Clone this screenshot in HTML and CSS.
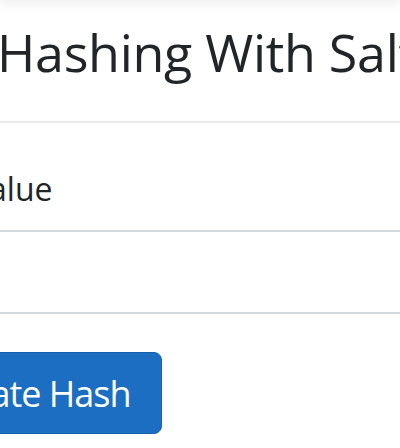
FILE: index.html
```html
<!DOCTYPE html>
<html lang="en">
<head>
<meta charset="utf-8">
<title>Hashing With Salt</title>
<link rel="stylesheet" href="styles.css">
</head>
<body>
<div class="topbar"></div>
<main class="card">
  <div class="card-header">
    <h1 class="title">Hashing With Salt</h1>
  </div>
  <form class="card-body">
    <input class="field field-value" type="text" placeholder="Value">
    <input class="field field-salt" type="text">
    <button class="btn-primary" type="button">Generate Hash</button>
  </form>
</main>
</body>
</html>
```

FILE: styles.css
```css
html, body {
  margin: 0;
  padding: 0;
  background: #fff;
  overflow: hidden;
}
body {
  width: 400px;
  height: 448px;
  font-family: "Open Sans", "Noto Sans", sans-serif;
  color: #212529;
}
.topbar {
  height: 20px;
  margin-top: -20px;
  box-shadow: 0 4px 12px rgba(0, 0, 0, 0.07);
}
.card {
  display: flex;
  flex-direction: column;
  width: 700px;
}
.card-header {
  border-bottom: 2px solid #ebebeb;
  padding: 20px 0 0 0;
  height: 123px;
  box-sizing: border-box;
}
.title {
  margin: 0 0 0 -3px;
  font-size: 52px;
  font-weight: 500;
  line-height: 64px;
  letter-spacing: -0.3px;
  white-space: nowrap;
}
.card-body {
  display: flex;
  flex-direction: column;
  align-items: flex-start;
  padding-top: 27px;
}
.field {
  width: 700px;
  height: 82px;
  box-sizing: border-box;
  border: none;
  border-bottom: 2px solid #d2d7dd;
  outline: none;
  background: transparent;
  font-family: inherit;
  font-size: 32px;
  color: #212529;
  padding: 0 0 4px 0;
  margin-left: -30px;
}
.field::placeholder {
  color: #212529;
  opacity: 1;
}
.btn-primary {
  margin-top: 38px;
  margin-left: -139px;
  height: 82px;
  padding: 0 30px 0 30px;
  border: 1px solid #1861ac;
  border-radius: 8px;
  background: #1b6ec2;
  color: #fff;
  font-family: inherit;
  font-size: 36px;
  letter-spacing: -1px;
  white-space: nowrap;
}
```
